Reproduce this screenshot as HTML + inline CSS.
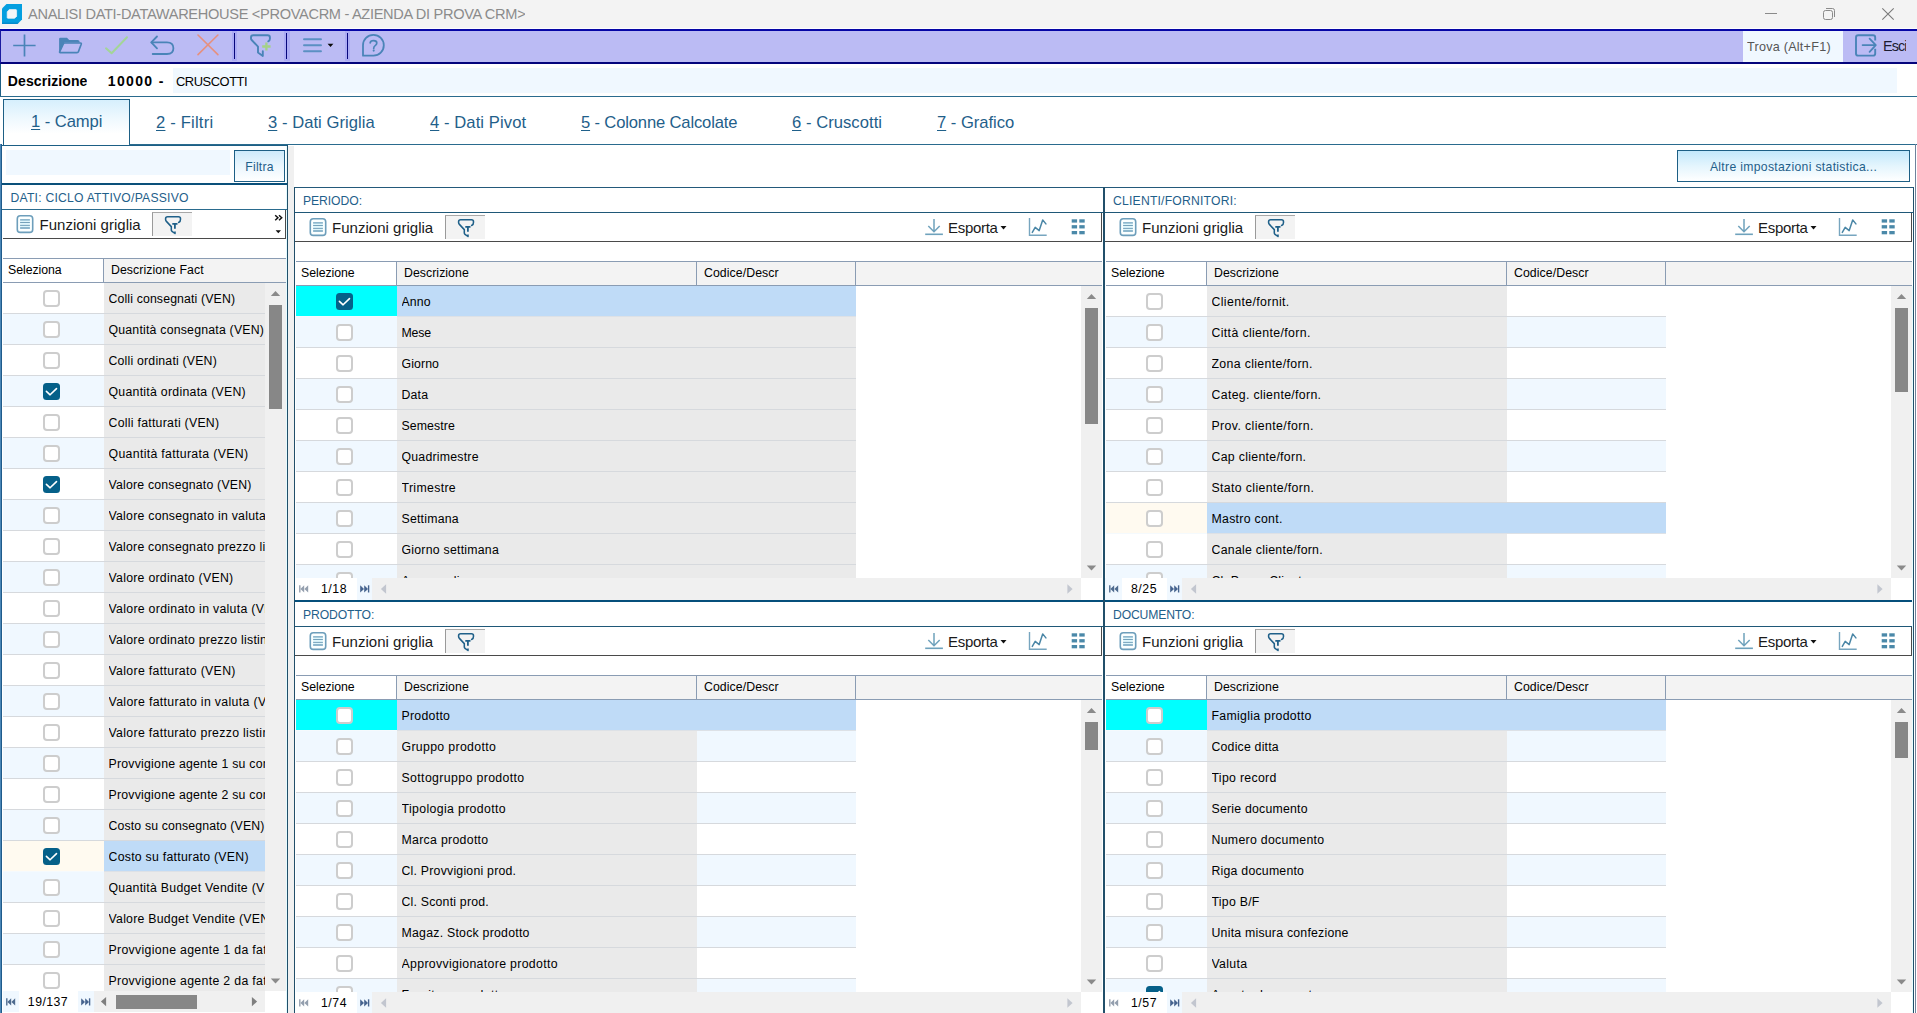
<!DOCTYPE html>
<html><head><meta charset="utf-8"><title>Analisi dati</title>
<style>
html,body{margin:0;padding:0}
body{width:1917px;height:1013px;overflow:hidden;position:relative;background:#fff;
 font-family:"Liberation Sans",sans-serif;font-size:12px;color:#000;}
div,span,svg{position:absolute;box-sizing:border-box}
.t{white-space:nowrap;overflow:hidden}
.g{font-size:12.3px;letter-spacing:.2px;color:#000;white-space:nowrap;overflow:hidden}
.lbl{font-size:12.2px;letter-spacing:.15px;color:#1f608a;white-space:nowrap}
.fg{font-size:15px;letter-spacing:.02px;color:#1a1a1a;white-space:nowrap}
.tab{font-size:16.6px;letter-spacing:.1px;color:#1f608a;white-space:nowrap}
.tab u{text-decoration-thickness:1px;text-underline-offset:2px}
.cb{width:17px;height:17px;border:2px solid #cdcdcd;border-radius:4px;background:#fff}
.cbc{width:17px;height:17px;border-radius:3.5px;background:#056089}
.hl{background:#8a9cb3}
.rl{background:#d6d9dd}
</style></head>
<body>
<div style="left:0px;top:0px;width:1917px;height:29px;background:#f3f3f3;"></div>
<div style="left:0px;top:28px;width:1917px;height:1px;background:#fbfbff;"></div>
<svg style="left:2px;top:4px" width="20" height="20" viewBox="0 0 20 20"><path d="M4.5 0H20V15.5L15.5 20H0V4.5Z" fill="#049fe0"/><path d="M0 18.4V20H15.5L17.1 18.4Z" fill="#0377b8" opacity=".5"/><path d="M7.3 5.6H13.8Q14.6 5.6 14.6 6.4V12.3L12.6 14.3H6Q5.2 14.3 5.2 13.5V7.7Z" fill="#f4f6f8" stroke="#f4f6f8" stroke-width="0.7" stroke-linejoin="round"/></svg>
<div class="t" style="left:28px;top:4px;height:21px;line-height:21px;font-size:14.6px;color:#8b8b8b;letter-spacing:-.32px;">ANALISI DATI-DATAWAREHOUSE &lt;PROVACRM - AZIENDA DI PROVA CRM&gt;</div>
<div style="left:1765px;top:13px;width:12px;height:1px;background:#8a8a8a;"></div>
<svg style="left:1822px;top:7px" width="14" height="14" viewBox="0 0 14 14"><rect x="1.5" y="3.5" width="9" height="9" rx="2" fill="none" stroke="#8a8a8a" stroke-width="1"/><path d="M4 1.5H10.5Q12.5 1.5 12.5 3.5V10" fill="none" stroke="#8a8a8a" stroke-width="1"/></svg>
<svg style="left:1881px;top:7px" width="14" height="14" viewBox="0 0 14 14"><path d="M1.3 1.3L12.7 12.7M12.7 1.3L1.3 12.7" stroke="#7a7a7a" stroke-width="1.1" fill="none"/></svg>
<div style="left:0px;top:29px;width:1917px;height:35px;background:#bbbbf4;border-top:2px solid #0505a5;border-bottom:2px solid #04047c;border-left:1px solid #1a1aa0;"></div>
<svg style="left:12px;top:33px" width="26" height="26" viewBox="0 0 26 26"><path d="M12.5 1.6V23.4M1.2 12.5H23.6" stroke="#4a84b8" stroke-width="1.7" fill="none"/></svg>
<svg style="left:58px;top:35px" width="26" height="22" viewBox="0 0 26 22"><path d="M1.1 17.5V4Q1.1 2.8 2.3 2.8H9L11.2 4.9H19.6Q21.6 4.9 21.7 7V7.6H7Q5.9 7.6 5.5 8.6L1.7 17.5Z" fill="#4a84b8"/><path d="M6.6 8H22.4Q23.6 8 23.2 9.2L20.4 16.8Q20.1 17.6 19 17.6H2.3Q1.3 17.6 1.7 16.6L5.3 8.8Q5.7 8 6.6 8Z" fill="none" stroke="#4a84b8" stroke-width="1.7" stroke-linejoin="round"/></svg>
<svg style="left:103px;top:34px" width="28" height="24" viewBox="0 0 28 24"><path d="M3 14.3L8.6 19.3L24 3.3" stroke="#a3d597" stroke-width="2" fill="none" stroke-linecap="round" stroke-linejoin="round"/></svg>
<svg style="left:150px;top:34px" width="26" height="24" viewBox="0 0 26 24"><path d="M7 2.5L1.3 8.4L7 14.4" fill="none" stroke="#4a84b8" stroke-width="1.8" stroke-linecap="round" stroke-linejoin="round"/><path d="M1.6 8.4H17Q23.4 8.4 23.4 14.2Q23.4 20 17 20H2.7" fill="none" stroke="#4a84b8" stroke-width="1.8" stroke-linecap="round"/></svg>
<svg style="left:196px;top:34px" width="24" height="24" viewBox="0 0 24 24"><path d="M2 1L21.9 20.6M21.9 1L2 20.6" stroke="#e6907f" stroke-width="1.6" fill="none" stroke-linecap="round"/></svg>
<div style="left:231.7px;top:31px;width:5.8px;height:30px;background:#ababf4;"></div>
<div style="left:233.65px;top:33px;width:1.7px;height:26px;background:#06067c;"></div>
<div style="left:283.8px;top:31px;width:5.8px;height:30px;background:#ababf4;"></div>
<div style="left:285.75px;top:33px;width:1.7px;height:26px;background:#06067c;"></div>
<div style="left:344.7px;top:31px;width:5.8px;height:30px;background:#ababf4;"></div>
<div style="left:346.65px;top:33px;width:1.7px;height:26px;background:#06067c;"></div>
<svg style="left:240px;top:28px" width="40" height="36" viewBox="0 0 40 36"><path d="M28.3 13.3Q30 12.6 29.9 10.6V9.4Q29.9 7.2 27.6 7.2H13.2Q11 7.2 11 9.4V10.4Q11 11.3 11.7 12L18 18.6V24.4L22.8 27.9V23.2" fill="none" stroke="#4a84b8" stroke-width="1.9" stroke-linejoin="round" stroke-linecap="round"/><path d="M26.4 14.4V22.6M22.2 18.5H30.6" stroke="#a4d286" stroke-width="2.3" fill="none"/></svg>
<svg style="left:295px;top:28px" width="50" height="36" viewBox="0 0 50 36"><path d="M9 11.2H26M9 17.2H26M9 23.2H26" stroke="#5b90c2" stroke-width="1.9" fill="none" stroke-linecap="round"/><path d="M32.6 15.8H38.4L35.5 19.1Z" fill="#0a0a0a"/></svg>
<svg style="left:355px;top:28px" width="36" height="36" viewBox="0 0 36 36"><path d="M8 27.7V17.3A10.4 10.4 0 1 1 18.4 27.7Z" fill="none" stroke="#4a84b8" stroke-width="1.8" stroke-linejoin="round"/><path d="M15.2 14.8Q15.4 12.6 18.6 12.6Q21.8 12.6 21.8 15Q21.8 16.6 20.2 17.6Q18.7 18.5 18.7 20.4" fill="none" stroke="#4a84b8" stroke-width="1.7" stroke-linecap="round"/><circle cx="18.7" cy="22.6" r="1.05" fill="#4a84b8"/></svg>
<div style="left:1743px;top:31px;width:100px;height:31px;background:#f0f8ff;"></div>
<div class="t" style="left:1747px;top:32px;height:31px;line-height:31px;font-size:12.6px;color:#555;letter-spacing:.25px;">Trova (Alt+F1)</div>
<svg style="left:1850px;top:28px" width="30" height="36" viewBox="0 0 30 36"><path d="M25.2 12.4V9.4Q25.2 7.2 23 7.2H8.2Q6 7.2 6 9.4V25.4Q6 27.6 8.2 27.6H23Q25.2 27.6 25.2 25.4V20.8" fill="none" stroke="#4a84b8" stroke-width="1.9" stroke-linecap="butt"/><path d="M12.6 17.1H25.2M19.6 10.6L25.8 17.1L19.6 23.8" fill="none" stroke="#4a84b8" stroke-width="1.8" stroke-linecap="round" stroke-linejoin="round"/></svg>
<div class="t" style="left:1883px;top:35px;height:23px;line-height:23px;font-size:14.4px;color:#1c1c30;letter-spacing:-.95px;">Esci</div>
<div style="left:0px;top:64px;width:1px;height:33px;background:#1d5f85;"></div>
<div class="t" style="left:7.8px;top:69px;height:25px;line-height:25px;font-weight:bold;font-size:14px;letter-spacing:.1px;">Descrizione</div>
<div class="t" style="left:107.8px;top:69px;height:25px;line-height:25px;font-weight:bold;font-size:14px;letter-spacing:1.35px;">10000 -</div>
<div style="left:173px;top:68px;width:1724px;height:25px;background:#f0f8ff;"></div>
<div class="t" style="left:176px;top:69px;height:25px;line-height:25px;font-size:12.9px;letter-spacing:-.45px;">CRUSCOTTI</div>
<div style="left:0px;top:96px;width:1917px;height:1px;background:#2a6b8e;"></div>
<div style="left:3px;top:99px;width:127px;height:46px;border:1px solid #1d5f85;border-bottom:none;background:linear-gradient(#d6effd 0%,#eef8fe 40%,#ffffff 75%);"></div>
<div class="tab" style="left:31px;top:110px;height:24px;line-height:24px;letter-spacing:-0.062px;"><u>1</u> - Campi</div>
<div class="tab" style="left:156px;top:111px;height:24px;line-height:24px;letter-spacing:0.196px;"><u>2</u> - Filtri</div>
<div class="tab" style="left:268px;top:111px;height:24px;line-height:24px;letter-spacing:0.044px;"><u>3</u> - Dati Griglia</div>
<div class="tab" style="left:430px;top:111px;height:24px;line-height:24px;letter-spacing:0.082px;"><u>4</u> - Dati Pivot</div>
<div class="tab" style="left:581px;top:111px;height:24px;line-height:24px;letter-spacing:-0.155px;"><u>5</u> - Colonne Calcolate</div>
<div class="tab" style="left:792px;top:111px;height:24px;line-height:24px;letter-spacing:0.044px;"><u>6</u> - Cruscotti</div>
<div class="tab" style="left:937px;top:111px;height:24px;line-height:24px;letter-spacing:-0.019px;"><u>7</u> - Grafico</div>
<div style="left:129px;top:144px;width:1788px;height:1px;background:#2a6b8e;"></div>
<div style="left:129px;top:145px;width:159px;height:1px;background:#1d5f85;"></div>
<div style="left:288px;top:146px;width:6px;height:867px;background:#f0f0f0;"></div>
<div style="left:294px;top:187px;width:810px;height:1px;background:#23597a;"></div>
<div style="left:294px;top:187px;width:1px;height:414px;background:#214f6a;"></div>
<div class="lbl" style="left:303px;top:189px;height:24px;line-height:24px;letter-spacing:-0.083px;">PERIODO:</div>
<div style="left:295px;top:212px;width:808px;height:1px;background:#1f5878;"></div>
<div style="left:295px;top:241px;width:807px;height:1px;background:#4a4a4a;"></div>
<div style="left:1101px;top:213px;width:1px;height:29px;background:#4a4a4a;"></div>
<svg style="left:309px;top:218px" width="19" height="19" viewBox="0 0 19 19"><rect x="1.3" y="0.8" width="15.4" height="16.6" rx="3" fill="#fbffff" stroke="#6d9ebb" stroke-width="1.6"/><rect x="4.1" y="4.2" width="9.8" height="9.6" fill="#dff6fb"/><path d="M4.1 4.9H13.9M4.1 13H13.9" stroke="#73a3bf" stroke-width="1.4" fill="none"/><path d="M4.1 7.5H13.9M4.1 10.4H13.9" stroke="#6a98b3" stroke-width="0.9" fill="none"/></svg>
<div class="fg" style="left:332px;top:216px;height:24px;line-height:24px;">Funzioni griglia</div>
<div style="left:445px;top:215px;width:40px;height:24px;background:#f3f3f3;border-left:1px solid #9a9a9a;border-top:1px solid #a8a8a8;"></div>
<svg style="left:445px;top:215px" width="40" height="24" viewBox="0 0 40 24"><path d="M26.6 10.5Q28.6 9.6 28.5 7.2V6.7Q28.5 4.7 26.5 4.7H15.6Q13.6 4.7 13.6 6.7V7.6Q13.6 8.6 14.4 9.4L19.3 14.6V18Q19.3 18.8 20 19.3L23 21.5V20" fill="none" stroke="#1f6089" stroke-width="1.55" stroke-linejoin="round" stroke-linecap="round"/><path d="M20.3 11.9H25.5M22.9 11.9V16.8" stroke="#1f6089" stroke-width="1.8" fill="none"/></svg>
<svg style="left:924px;top:218px" width="20" height="20" viewBox="0 0 20 20"><path d="M10 1V13.4M4.3 8L10 13.7L15.7 8" fill="none" stroke="#6fa2bc" stroke-width="1.5" stroke-linejoin="miter"/><path d="M1.2 16.3H18.9" stroke="#6fa2bc" stroke-width="1.6"/></svg>
<div class="fg" style="left:948px;top:216px;height:24px;line-height:24px;letter-spacing:-.3px;">Esporta</div>
<svg style="left:1000px;top:225px" width="8" height="6" viewBox="0 0 8 6"><path d="M0.5 1H6.5L3.5 4.4Z" fill="#111"/></svg>
<svg style="left:1028px;top:217px" width="22" height="22" viewBox="0 0 22 22"><path d="M1.5 1V18.2H18.7" fill="none" stroke="#77a5bf" stroke-width="1.4"/><path d="M4.3 15.4L7.2 10.4L11.2 13.6L14.7 2.9L17.9 6.9" fill="none" stroke="#4a86a6" stroke-width="1.5" stroke-linejoin="round" stroke-linecap="round"/></svg>
<svg style="left:1071px;top:219px" width="15" height="16" viewBox="0 0 15 16"><rect x="0.7" y="0.3" width="5.4" height="3.3" fill="#4b89a9"/><rect x="8.3" y="0.3" width="5.4" height="3.3" fill="#4b89a9"/><rect x="0.7" y="6.15" width="5.4" height="3.3" fill="#4b89a9"/><rect x="8.3" y="6.15" width="5.4" height="3.3" fill="#4b89a9"/><rect x="0.7" y="12" width="5.4" height="3.3" fill="#4b89a9"/><rect x="8.3" y="12" width="5.4" height="3.3" fill="#4b89a9"/></svg>
<div style="left:296px;top:261px;width:806px;height:1px;background:#8a9cb3;"></div>
<div style="left:296px;top:262px;width:100px;height:23px;background:#fff;"></div>
<div style="left:397px;top:262px;width:705px;height:23px;background:#f3f3f3;"></div>
<div style="left:296px;top:285px;width:806px;height:1px;background:#8a9cb3;"></div>
<div style="left:396px;top:261px;width:1px;height:25px;background:#8a9cb3;"></div>
<div style="left:696px;top:261px;width:1px;height:25px;background:#8a9cb3;"></div>
<div style="left:855px;top:261px;width:1px;height:25px;background:#8a9cb3;"></div>
<div class="g" style="left:301px;top:262px;height:23px;line-height:23px;letter-spacing:-0.044px;">Selezione</div>
<div class="g" style="left:404px;top:262px;height:23px;line-height:23px;letter-spacing:0.048px;">Descrizione</div>
<div class="g" style="left:704px;top:262px;height:23px;line-height:23px;letter-spacing:0.074px;">Codice/Descr</div>
<div style="left:295px;top:286px;width:808px;height:292px;overflow:hidden">
<div style="left:1px;top:0px;width:101px;height:30px;background:#00ffff;"></div>
<div style="left:102px;top:0px;width:300px;height:30px;background:#bfdbf7;"></div>
<div style="left:402px;top:0px;width:159px;height:30px;background:#bfdbf7;"></div>
<div style="left:1px;top:30px;width:101px;height:1px;background:#f5fafd;"></div>
<div style="left:102px;top:30px;width:459px;height:1px;background:#dde1e6;"></div>
<div class="cbc" style="left:41px;top:7px"><svg style="left:0;top:0" width="17" height="17" viewBox="0 0 17 17"><path d="M3.4 8.4L7.1 11.8L13.5 5.6" fill="none" stroke="#fff" stroke-width="1.6" stroke-linecap="round" stroke-linejoin="round"/></svg></div>
<div class="g" style="left:106.5px;top:1px;height:30px;line-height:30px;width:294px;letter-spacing:0.128px;">Anno</div>
<div style="left:1px;top:31px;width:101px;height:30px;background:#f0f8ff;"></div>
<div style="left:102px;top:31px;width:300px;height:30px;background:#eaeaea;"></div>
<div style="left:402px;top:31px;width:159px;height:30px;background:#eaeaea;"></div>
<div style="left:1px;top:61px;width:560px;height:1px;background:#d6d9dd;"></div>
<div class="cb" style="left:41px;top:38px"></div>
<div class="g" style="left:106.5px;top:32px;height:30px;line-height:30px;width:294px;letter-spacing:-0.164px;">Mese</div>
<div style="left:1px;top:62px;width:101px;height:30px;background:#fff;"></div>
<div style="left:102px;top:62px;width:300px;height:30px;background:#eaeaea;"></div>
<div style="left:402px;top:62px;width:159px;height:30px;background:#eaeaea;"></div>
<div style="left:1px;top:92px;width:560px;height:1px;background:#d6d9dd;"></div>
<div class="cb" style="left:41px;top:69px"></div>
<div class="g" style="left:106.5px;top:63px;height:30px;line-height:30px;width:294px;letter-spacing:0.106px;">Giorno</div>
<div style="left:1px;top:93px;width:101px;height:30px;background:#f0f8ff;"></div>
<div style="left:102px;top:93px;width:300px;height:30px;background:#eaeaea;"></div>
<div style="left:402px;top:93px;width:159px;height:30px;background:#eaeaea;"></div>
<div style="left:1px;top:123px;width:560px;height:1px;background:#d6d9dd;"></div>
<div class="cb" style="left:41px;top:100px"></div>
<div class="g" style="left:106.5px;top:94px;height:30px;line-height:30px;width:294px;letter-spacing:0.180px;">Data</div>
<div style="left:1px;top:124px;width:101px;height:30px;background:#fff;"></div>
<div style="left:102px;top:124px;width:300px;height:30px;background:#eaeaea;"></div>
<div style="left:402px;top:124px;width:159px;height:30px;background:#eaeaea;"></div>
<div style="left:1px;top:154px;width:560px;height:1px;background:#d6d9dd;"></div>
<div class="cb" style="left:41px;top:131px"></div>
<div class="g" style="left:106.5px;top:125px;height:30px;line-height:30px;width:294px;letter-spacing:0.088px;">Semestre</div>
<div style="left:1px;top:155px;width:101px;height:30px;background:#f0f8ff;"></div>
<div style="left:102px;top:155px;width:300px;height:30px;background:#eaeaea;"></div>
<div style="left:402px;top:155px;width:159px;height:30px;background:#eaeaea;"></div>
<div style="left:1px;top:185px;width:560px;height:1px;background:#d6d9dd;"></div>
<div class="cb" style="left:41px;top:162px"></div>
<div class="g" style="left:106.5px;top:156px;height:30px;line-height:30px;width:294px;letter-spacing:0.231px;">Quadrimestre</div>
<div style="left:1px;top:186px;width:101px;height:30px;background:#fff;"></div>
<div style="left:102px;top:186px;width:300px;height:30px;background:#eaeaea;"></div>
<div style="left:402px;top:186px;width:159px;height:30px;background:#eaeaea;"></div>
<div style="left:1px;top:216px;width:560px;height:1px;background:#d6d9dd;"></div>
<div class="cb" style="left:41px;top:193px"></div>
<div class="g" style="left:106.5px;top:187px;height:30px;line-height:30px;width:294px;letter-spacing:0.339px;">Trimestre</div>
<div style="left:1px;top:217px;width:101px;height:30px;background:#f0f8ff;"></div>
<div style="left:102px;top:217px;width:300px;height:30px;background:#eaeaea;"></div>
<div style="left:402px;top:217px;width:159px;height:30px;background:#eaeaea;"></div>
<div style="left:1px;top:247px;width:560px;height:1px;background:#d6d9dd;"></div>
<div class="cb" style="left:41px;top:224px"></div>
<div class="g" style="left:106.5px;top:218px;height:30px;line-height:30px;width:294px;letter-spacing:0.219px;">Settimana</div>
<div style="left:1px;top:248px;width:101px;height:30px;background:#fff;"></div>
<div style="left:102px;top:248px;width:300px;height:30px;background:#eaeaea;"></div>
<div style="left:402px;top:248px;width:159px;height:30px;background:#eaeaea;"></div>
<div style="left:1px;top:278px;width:560px;height:1px;background:#d6d9dd;"></div>
<div class="cb" style="left:41px;top:255px"></div>
<div class="g" style="left:106.5px;top:249px;height:30px;line-height:30px;width:294px;letter-spacing:0.242px;">Giorno settimana</div>
<div style="left:1px;top:279px;width:101px;height:30px;background:#f0f8ff;"></div>
<div style="left:102px;top:279px;width:300px;height:30px;background:#eaeaea;"></div>
<div style="left:402px;top:279px;width:159px;height:30px;background:#eaeaea;"></div>
<div style="left:1px;top:309px;width:560px;height:1px;background:#d6d9dd;"></div>
<div class="cb" style="left:41px;top:286px"></div>
<div class="g" style="left:106.5px;top:280px;height:30px;line-height:30px;width:294px;letter-spacing:0.126px;">Anno scoli</div>
</div>
<div style="left:1081px;top:286px;width:21px;height:292px;background:#f0f0f0;"></div>
<svg style="left:1081px;top:286px" width="21" height="292" viewBox="0 0 21 292"><path d="M5.8 13.1L15.2 13.1L10.5 7.9Z" fill="#8a8a8a"/><path d="M5.8 279.4L15.2 279.4L10.5 284.6Z" fill="#8a8a8a"/></svg>
<div style="left:1085px;top:308px;width:13px;height:116px;background:#878787;"></div>
<div style="left:295px;top:578px;width:62px;height:22px;background:#fff;"></div>
<div style="left:357px;top:578px;width:15px;height:22px;background:#f0f8ff;"></div>
<div style="left:372px;top:578px;width:709px;height:22px;background:#f0f0f0;"></div>
<svg style="left:299px;top:585px" width="10" height="8" viewBox="0 0 10 8"><path d="M0.8 0.3V7.5" stroke="#949fae" stroke-width="1.4"/><path d="M5.2 0.3V7.5L1.4 3.9Z" fill="#949fae"/><path d="M9.2 0.3V7.5L5.4 3.9Z" fill="#949fae"/></svg>
<div class="g" style="left:309px;top:578px;height:22px;line-height:22px;width:50px;letter-spacing:0.555px;text-align:center;">1/18</div>
<svg style="left:360px;top:585px" width="10" height="8" viewBox="0 0 10 8"><path d="M8.6 0.3V7.5" stroke="#46648f" stroke-width="1.4"/><path d="M4.2 0.3V7.5L8 3.9Z" fill="#46648f"/><path d="M0.2 0.3V7.5L4 3.9Z" fill="#46648f"/></svg>
<svg style="left:372px;top:578px" width="709" height="22" viewBox="0 0 709 22"><path d="M14.1 6.3L14.1 15.7L8.9 11Z" fill="#c2c6cf"/><path d="M695.4 6.3L695.4 15.7L700.6 11Z" fill="#c2c6cf"/></svg>
<div style="left:1103px;top:187px;width:811px;height:1px;background:#23597a;"></div>
<div style="left:1103px;top:187px;width:2px;height:414px;background:#214f6a;"></div>
<div class="lbl" style="left:1113px;top:189px;height:24px;line-height:24px;letter-spacing:0.198px;">CLIENTI/FORNITORI:</div>
<div style="left:1105px;top:212px;width:808px;height:1px;background:#1f5878;"></div>
<div style="left:1105px;top:241px;width:807px;height:1px;background:#4a4a4a;"></div>
<div style="left:1911px;top:213px;width:1px;height:29px;background:#4a4a4a;"></div>
<svg style="left:1119px;top:218px" width="19" height="19" viewBox="0 0 19 19"><rect x="1.3" y="0.8" width="15.4" height="16.6" rx="3" fill="#fbffff" stroke="#6d9ebb" stroke-width="1.6"/><rect x="4.1" y="4.2" width="9.8" height="9.6" fill="#dff6fb"/><path d="M4.1 4.9H13.9M4.1 13H13.9" stroke="#73a3bf" stroke-width="1.4" fill="none"/><path d="M4.1 7.5H13.9M4.1 10.4H13.9" stroke="#6a98b3" stroke-width="0.9" fill="none"/></svg>
<div class="fg" style="left:1142px;top:216px;height:24px;line-height:24px;">Funzioni griglia</div>
<div style="left:1255px;top:215px;width:40px;height:24px;background:#f3f3f3;border-left:1px solid #9a9a9a;border-top:1px solid #a8a8a8;"></div>
<svg style="left:1255px;top:215px" width="40" height="24" viewBox="0 0 40 24"><path d="M26.6 10.5Q28.6 9.6 28.5 7.2V6.7Q28.5 4.7 26.5 4.7H15.6Q13.6 4.7 13.6 6.7V7.6Q13.6 8.6 14.4 9.4L19.3 14.6V18Q19.3 18.8 20 19.3L23 21.5V20" fill="none" stroke="#1f6089" stroke-width="1.55" stroke-linejoin="round" stroke-linecap="round"/><path d="M20.3 11.9H25.5M22.9 11.9V16.8" stroke="#1f6089" stroke-width="1.8" fill="none"/></svg>
<svg style="left:1734px;top:218px" width="20" height="20" viewBox="0 0 20 20"><path d="M10 1V13.4M4.3 8L10 13.7L15.7 8" fill="none" stroke="#6fa2bc" stroke-width="1.5" stroke-linejoin="miter"/><path d="M1.2 16.3H18.9" stroke="#6fa2bc" stroke-width="1.6"/></svg>
<div class="fg" style="left:1758px;top:216px;height:24px;line-height:24px;letter-spacing:-.3px;">Esporta</div>
<svg style="left:1810px;top:225px" width="8" height="6" viewBox="0 0 8 6"><path d="M0.5 1H6.5L3.5 4.4Z" fill="#111"/></svg>
<svg style="left:1838px;top:217px" width="22" height="22" viewBox="0 0 22 22"><path d="M1.5 1V18.2H18.7" fill="none" stroke="#77a5bf" stroke-width="1.4"/><path d="M4.3 15.4L7.2 10.4L11.2 13.6L14.7 2.9L17.9 6.9" fill="none" stroke="#4a86a6" stroke-width="1.5" stroke-linejoin="round" stroke-linecap="round"/></svg>
<svg style="left:1881px;top:219px" width="15" height="16" viewBox="0 0 15 16"><rect x="0.7" y="0.3" width="5.4" height="3.3" fill="#4b89a9"/><rect x="8.3" y="0.3" width="5.4" height="3.3" fill="#4b89a9"/><rect x="0.7" y="6.15" width="5.4" height="3.3" fill="#4b89a9"/><rect x="8.3" y="6.15" width="5.4" height="3.3" fill="#4b89a9"/><rect x="0.7" y="12" width="5.4" height="3.3" fill="#4b89a9"/><rect x="8.3" y="12" width="5.4" height="3.3" fill="#4b89a9"/></svg>
<div style="left:1106px;top:261px;width:806px;height:1px;background:#8a9cb3;"></div>
<div style="left:1106px;top:262px;width:100px;height:23px;background:#fff;"></div>
<div style="left:1207px;top:262px;width:705px;height:23px;background:#f3f3f3;"></div>
<div style="left:1106px;top:285px;width:806px;height:1px;background:#8a9cb3;"></div>
<div style="left:1206px;top:261px;width:1px;height:25px;background:#8a9cb3;"></div>
<div style="left:1506px;top:261px;width:1px;height:25px;background:#8a9cb3;"></div>
<div style="left:1665px;top:261px;width:1px;height:25px;background:#8a9cb3;"></div>
<div class="g" style="left:1111px;top:262px;height:23px;line-height:23px;letter-spacing:-0.044px;">Selezione</div>
<div class="g" style="left:1214px;top:262px;height:23px;line-height:23px;letter-spacing:0.048px;">Descrizione</div>
<div class="g" style="left:1514px;top:262px;height:23px;line-height:23px;letter-spacing:0.074px;">Codice/Descr</div>
<div style="left:1105px;top:286px;width:808px;height:292px;overflow:hidden">
<div style="left:1px;top:0px;width:101px;height:30px;background:#fff;"></div>
<div style="left:102px;top:0px;width:300px;height:30px;background:#eaeaea;"></div>
<div style="left:402px;top:0px;width:159px;height:30px;background:#fff;"></div>
<div style="left:1px;top:30px;width:560px;height:1px;background:#d6d9dd;"></div>
<div class="cb" style="left:41px;top:7px"></div>
<div class="g" style="left:106.5px;top:1px;height:30px;line-height:30px;width:294px;letter-spacing:0.375px;">Cliente/fornit.</div>
<div style="left:1px;top:31px;width:101px;height:30px;background:#f0f8ff;"></div>
<div style="left:102px;top:31px;width:300px;height:30px;background:#eaeaea;"></div>
<div style="left:402px;top:31px;width:159px;height:30px;background:#f0f8ff;"></div>
<div style="left:1px;top:61px;width:560px;height:1px;background:#d6d9dd;"></div>
<div class="cb" style="left:41px;top:38px"></div>
<div class="g" style="left:106.5px;top:32px;height:30px;line-height:30px;width:294px;letter-spacing:0.365px;">Città cliente/forn.</div>
<div style="left:1px;top:62px;width:101px;height:30px;background:#fff;"></div>
<div style="left:102px;top:62px;width:300px;height:30px;background:#eaeaea;"></div>
<div style="left:402px;top:62px;width:159px;height:30px;background:#fff;"></div>
<div style="left:1px;top:92px;width:560px;height:1px;background:#d6d9dd;"></div>
<div class="cb" style="left:41px;top:69px"></div>
<div class="g" style="left:106.5px;top:63px;height:30px;line-height:30px;width:294px;letter-spacing:0.350px;">Zona cliente/forn.</div>
<div style="left:1px;top:93px;width:101px;height:30px;background:#f0f8ff;"></div>
<div style="left:102px;top:93px;width:300px;height:30px;background:#eaeaea;"></div>
<div style="left:402px;top:93px;width:159px;height:30px;background:#f0f8ff;"></div>
<div style="left:1px;top:123px;width:560px;height:1px;background:#d6d9dd;"></div>
<div class="cb" style="left:41px;top:100px"></div>
<div class="g" style="left:106.5px;top:94px;height:30px;line-height:30px;width:294px;letter-spacing:0.331px;">Categ. cliente/forn.</div>
<div style="left:1px;top:124px;width:101px;height:30px;background:#fff;"></div>
<div style="left:102px;top:124px;width:300px;height:30px;background:#eaeaea;"></div>
<div style="left:402px;top:124px;width:159px;height:30px;background:#fff;"></div>
<div style="left:1px;top:154px;width:560px;height:1px;background:#d6d9dd;"></div>
<div class="cb" style="left:41px;top:131px"></div>
<div class="g" style="left:106.5px;top:125px;height:30px;line-height:30px;width:294px;letter-spacing:0.392px;">Prov. cliente/forn.</div>
<div style="left:1px;top:155px;width:101px;height:30px;background:#f0f8ff;"></div>
<div style="left:102px;top:155px;width:300px;height:30px;background:#eaeaea;"></div>
<div style="left:402px;top:155px;width:159px;height:30px;background:#f0f8ff;"></div>
<div style="left:1px;top:185px;width:560px;height:1px;background:#d6d9dd;"></div>
<div class="cb" style="left:41px;top:162px"></div>
<div class="g" style="left:106.5px;top:156px;height:30px;line-height:30px;width:294px;letter-spacing:0.307px;">Cap cliente/forn.</div>
<div style="left:1px;top:186px;width:101px;height:30px;background:#fff;"></div>
<div style="left:102px;top:186px;width:300px;height:30px;background:#eaeaea;"></div>
<div style="left:402px;top:186px;width:159px;height:30px;background:#fff;"></div>
<div style="left:1px;top:216px;width:560px;height:1px;background:#d6d9dd;"></div>
<div class="cb" style="left:41px;top:193px"></div>
<div class="g" style="left:106.5px;top:187px;height:30px;line-height:30px;width:294px;letter-spacing:0.369px;">Stato cliente/forn.</div>
<div style="left:1px;top:217px;width:101px;height:30px;background:#fffaf0;"></div>
<div style="left:102px;top:217px;width:300px;height:30px;background:#bfdbf7;"></div>
<div style="left:402px;top:217px;width:159px;height:30px;background:#bfdbf7;"></div>
<div style="left:1px;top:247px;width:101px;height:1px;background:#f5fafd;"></div>
<div style="left:102px;top:247px;width:459px;height:1px;background:#dde1e6;"></div>
<div class="cb" style="left:41px;top:224px"></div>
<div class="g" style="left:106.5px;top:218px;height:30px;line-height:30px;width:294px;letter-spacing:0.287px;">Mastro cont.</div>
<div style="left:1px;top:248px;width:101px;height:30px;background:#fff;"></div>
<div style="left:102px;top:248px;width:300px;height:30px;background:#eaeaea;"></div>
<div style="left:402px;top:248px;width:159px;height:30px;background:#fff;"></div>
<div style="left:1px;top:278px;width:560px;height:1px;background:#d6d9dd;"></div>
<div class="cb" style="left:41px;top:255px"></div>
<div class="g" style="left:106.5px;top:249px;height:30px;line-height:30px;width:294px;letter-spacing:0.273px;">Canale cliente/forn.</div>
<div style="left:1px;top:279px;width:101px;height:30px;background:#f0f8ff;"></div>
<div style="left:102px;top:279px;width:300px;height:30px;background:#eaeaea;"></div>
<div style="left:402px;top:279px;width:159px;height:30px;background:#f0f8ff;"></div>
<div style="left:1px;top:309px;width:560px;height:1px;background:#d6d9dd;"></div>
<div class="cb" style="left:41px;top:286px"></div>
<div class="g" style="left:106.5px;top:280px;height:30px;line-height:30px;width:294px;letter-spacing:0.179px;">Cl. Provv. Cliente</div>
</div>
<div style="left:1891px;top:286px;width:21px;height:292px;background:#f0f0f0;"></div>
<svg style="left:1891px;top:286px" width="21" height="292" viewBox="0 0 21 292"><path d="M5.8 13.1L15.2 13.1L10.5 7.9Z" fill="#8a8a8a"/><path d="M5.8 279.4L15.2 279.4L10.5 284.6Z" fill="#8a8a8a"/></svg>
<div style="left:1895px;top:308px;width:13px;height:84px;background:#878787;"></div>
<div style="left:1105px;top:578px;width:62px;height:22px;background:#fff;"></div>
<div style="left:1105px;top:578px;width:17px;height:22px;background:#f0f8ff;"></div>
<div style="left:1167px;top:578px;width:15px;height:22px;background:#f0f8ff;"></div>
<div style="left:1182px;top:578px;width:709px;height:22px;background:#f0f0f0;"></div>
<svg style="left:1109px;top:585px" width="10" height="8" viewBox="0 0 10 8"><path d="M0.8 0.3V7.5" stroke="#4d6a8e" stroke-width="1.4"/><path d="M5.2 0.3V7.5L1.4 3.9Z" fill="#4d6a8e"/><path d="M9.2 0.3V7.5L5.4 3.9Z" fill="#4d6a8e"/></svg>
<div class="g" style="left:1119px;top:578px;height:22px;line-height:22px;width:50px;letter-spacing:0.555px;text-align:center;">8/25</div>
<svg style="left:1170px;top:585px" width="10" height="8" viewBox="0 0 10 8"><path d="M8.6 0.3V7.5" stroke="#46648f" stroke-width="1.4"/><path d="M4.2 0.3V7.5L8 3.9Z" fill="#46648f"/><path d="M0.2 0.3V7.5L4 3.9Z" fill="#46648f"/></svg>
<svg style="left:1182px;top:578px" width="709" height="22" viewBox="0 0 709 22"><path d="M14.1 6.3L14.1 15.7L8.9 11Z" fill="#c2c6cf"/><path d="M695.4 6.3L695.4 15.7L700.6 11Z" fill="#c2c6cf"/></svg>
<div style="left:294px;top:600px;width:810px;height:2px;background:#054f7b;"></div>
<div style="left:294px;top:600px;width:1px;height:414px;background:#214f6a;"></div>
<div class="lbl" style="left:303px;top:603px;height:24px;line-height:24px;letter-spacing:-0.115px;">PRODOTTO:</div>
<div style="left:295px;top:626px;width:808px;height:1px;background:#1f5878;"></div>
<div style="left:295px;top:655px;width:807px;height:1px;background:#4a4a4a;"></div>
<div style="left:1101px;top:627px;width:1px;height:29px;background:#4a4a4a;"></div>
<svg style="left:309px;top:632px" width="19" height="19" viewBox="0 0 19 19"><rect x="1.3" y="0.8" width="15.4" height="16.6" rx="3" fill="#fbffff" stroke="#6d9ebb" stroke-width="1.6"/><rect x="4.1" y="4.2" width="9.8" height="9.6" fill="#dff6fb"/><path d="M4.1 4.9H13.9M4.1 13H13.9" stroke="#73a3bf" stroke-width="1.4" fill="none"/><path d="M4.1 7.5H13.9M4.1 10.4H13.9" stroke="#6a98b3" stroke-width="0.9" fill="none"/></svg>
<div class="fg" style="left:332px;top:630px;height:24px;line-height:24px;">Funzioni griglia</div>
<div style="left:445px;top:629px;width:40px;height:24px;background:#f3f3f3;border-left:1px solid #9a9a9a;border-top:1px solid #a8a8a8;"></div>
<svg style="left:445px;top:629px" width="40" height="24" viewBox="0 0 40 24"><path d="M26.6 10.5Q28.6 9.6 28.5 7.2V6.7Q28.5 4.7 26.5 4.7H15.6Q13.6 4.7 13.6 6.7V7.6Q13.6 8.6 14.4 9.4L19.3 14.6V18Q19.3 18.8 20 19.3L23 21.5V20" fill="none" stroke="#1f6089" stroke-width="1.55" stroke-linejoin="round" stroke-linecap="round"/><path d="M20.3 11.9H25.5M22.9 11.9V16.8" stroke="#1f6089" stroke-width="1.8" fill="none"/></svg>
<svg style="left:924px;top:632px" width="20" height="20" viewBox="0 0 20 20"><path d="M10 1V13.4M4.3 8L10 13.7L15.7 8" fill="none" stroke="#6fa2bc" stroke-width="1.5" stroke-linejoin="miter"/><path d="M1.2 16.3H18.9" stroke="#6fa2bc" stroke-width="1.6"/></svg>
<div class="fg" style="left:948px;top:630px;height:24px;line-height:24px;letter-spacing:-.3px;">Esporta</div>
<svg style="left:1000px;top:639px" width="8" height="6" viewBox="0 0 8 6"><path d="M0.5 1H6.5L3.5 4.4Z" fill="#111"/></svg>
<svg style="left:1028px;top:631px" width="22" height="22" viewBox="0 0 22 22"><path d="M1.5 1V18.2H18.7" fill="none" stroke="#77a5bf" stroke-width="1.4"/><path d="M4.3 15.4L7.2 10.4L11.2 13.6L14.7 2.9L17.9 6.9" fill="none" stroke="#4a86a6" stroke-width="1.5" stroke-linejoin="round" stroke-linecap="round"/></svg>
<svg style="left:1071px;top:633px" width="15" height="16" viewBox="0 0 15 16"><rect x="0.7" y="0.3" width="5.4" height="3.3" fill="#4b89a9"/><rect x="8.3" y="0.3" width="5.4" height="3.3" fill="#4b89a9"/><rect x="0.7" y="6.15" width="5.4" height="3.3" fill="#4b89a9"/><rect x="8.3" y="6.15" width="5.4" height="3.3" fill="#4b89a9"/><rect x="0.7" y="12" width="5.4" height="3.3" fill="#4b89a9"/><rect x="8.3" y="12" width="5.4" height="3.3" fill="#4b89a9"/></svg>
<div style="left:296px;top:675px;width:806px;height:1px;background:#8a9cb3;"></div>
<div style="left:296px;top:676px;width:100px;height:23px;background:#fff;"></div>
<div style="left:397px;top:676px;width:705px;height:23px;background:#f3f3f3;"></div>
<div style="left:296px;top:699px;width:806px;height:1px;background:#8a9cb3;"></div>
<div style="left:396px;top:675px;width:1px;height:25px;background:#8a9cb3;"></div>
<div style="left:696px;top:675px;width:1px;height:25px;background:#8a9cb3;"></div>
<div style="left:855px;top:675px;width:1px;height:25px;background:#8a9cb3;"></div>
<div class="g" style="left:301px;top:676px;height:23px;line-height:23px;letter-spacing:-0.044px;">Selezione</div>
<div class="g" style="left:404px;top:676px;height:23px;line-height:23px;letter-spacing:0.048px;">Descrizione</div>
<div class="g" style="left:704px;top:676px;height:23px;line-height:23px;letter-spacing:0.074px;">Codice/Descr</div>
<div style="left:295px;top:700px;width:808px;height:292px;overflow:hidden">
<div style="left:1px;top:0px;width:101px;height:30px;background:#00ffff;"></div>
<div style="left:102px;top:0px;width:300px;height:30px;background:#bfdbf7;"></div>
<div style="left:402px;top:0px;width:159px;height:30px;background:#bfdbf7;"></div>
<div style="left:1px;top:30px;width:101px;height:1px;background:#f5fafd;"></div>
<div style="left:102px;top:30px;width:459px;height:1px;background:#dde1e6;"></div>
<div class="cb" style="left:41px;top:7px"></div>
<div class="g" style="left:106.5px;top:1px;height:30px;line-height:30px;width:294px;letter-spacing:0.277px;">Prodotto</div>
<div style="left:1px;top:31px;width:101px;height:30px;background:#f0f8ff;"></div>
<div style="left:102px;top:31px;width:300px;height:30px;background:#eaeaea;"></div>
<div style="left:402px;top:31px;width:159px;height:30px;background:#f0f8ff;"></div>
<div style="left:1px;top:61px;width:560px;height:1px;background:#d6d9dd;"></div>
<div class="cb" style="left:41px;top:38px"></div>
<div class="g" style="left:106.5px;top:32px;height:30px;line-height:30px;width:294px;letter-spacing:0.339px;">Gruppo prodotto</div>
<div style="left:1px;top:62px;width:101px;height:30px;background:#fff;"></div>
<div style="left:102px;top:62px;width:300px;height:30px;background:#eaeaea;"></div>
<div style="left:402px;top:62px;width:159px;height:30px;background:#fff;"></div>
<div style="left:1px;top:92px;width:560px;height:1px;background:#d6d9dd;"></div>
<div class="cb" style="left:41px;top:69px"></div>
<div class="g" style="left:106.5px;top:63px;height:30px;line-height:30px;width:294px;letter-spacing:0.377px;">Sottogruppo prodotto</div>
<div style="left:1px;top:93px;width:101px;height:30px;background:#f0f8ff;"></div>
<div style="left:102px;top:93px;width:300px;height:30px;background:#eaeaea;"></div>
<div style="left:402px;top:93px;width:159px;height:30px;background:#f0f8ff;"></div>
<div style="left:1px;top:123px;width:560px;height:1px;background:#d6d9dd;"></div>
<div class="cb" style="left:41px;top:100px"></div>
<div class="g" style="left:106.5px;top:94px;height:30px;line-height:30px;width:294px;letter-spacing:0.359px;">Tipologia prodotto</div>
<div style="left:1px;top:124px;width:101px;height:30px;background:#fff;"></div>
<div style="left:102px;top:124px;width:300px;height:30px;background:#eaeaea;"></div>
<div style="left:402px;top:124px;width:159px;height:30px;background:#fff;"></div>
<div style="left:1px;top:154px;width:560px;height:1px;background:#d6d9dd;"></div>
<div class="cb" style="left:41px;top:131px"></div>
<div class="g" style="left:106.5px;top:125px;height:30px;line-height:30px;width:294px;letter-spacing:0.305px;">Marca prodotto</div>
<div style="left:1px;top:155px;width:101px;height:30px;background:#f0f8ff;"></div>
<div style="left:102px;top:155px;width:300px;height:30px;background:#eaeaea;"></div>
<div style="left:402px;top:155px;width:159px;height:30px;background:#f0f8ff;"></div>
<div style="left:1px;top:185px;width:560px;height:1px;background:#d6d9dd;"></div>
<div class="cb" style="left:41px;top:162px"></div>
<div class="g" style="left:106.5px;top:156px;height:30px;line-height:30px;width:294px;letter-spacing:0.223px;">Cl. Provvigioni prod.</div>
<div style="left:1px;top:186px;width:101px;height:30px;background:#fff;"></div>
<div style="left:102px;top:186px;width:300px;height:30px;background:#eaeaea;"></div>
<div style="left:402px;top:186px;width:159px;height:30px;background:#fff;"></div>
<div style="left:1px;top:216px;width:560px;height:1px;background:#d6d9dd;"></div>
<div class="cb" style="left:41px;top:193px"></div>
<div class="g" style="left:106.5px;top:187px;height:30px;line-height:30px;width:294px;letter-spacing:0.210px;">Cl. Sconti prod.</div>
<div style="left:1px;top:217px;width:101px;height:30px;background:#f0f8ff;"></div>
<div style="left:102px;top:217px;width:300px;height:30px;background:#eaeaea;"></div>
<div style="left:402px;top:217px;width:159px;height:30px;background:#f0f8ff;"></div>
<div style="left:1px;top:247px;width:560px;height:1px;background:#d6d9dd;"></div>
<div class="cb" style="left:41px;top:224px"></div>
<div class="g" style="left:106.5px;top:218px;height:30px;line-height:30px;width:294px;letter-spacing:0.246px;">Magaz. Stock prodotto</div>
<div style="left:1px;top:248px;width:101px;height:30px;background:#fff;"></div>
<div style="left:102px;top:248px;width:300px;height:30px;background:#eaeaea;"></div>
<div style="left:402px;top:248px;width:159px;height:30px;background:#fff;"></div>
<div style="left:1px;top:278px;width:560px;height:1px;background:#d6d9dd;"></div>
<div class="cb" style="left:41px;top:255px"></div>
<div class="g" style="left:106.5px;top:249px;height:30px;line-height:30px;width:294px;letter-spacing:0.335px;">Approvvigionatore prodotto</div>
<div style="left:1px;top:279px;width:101px;height:30px;background:#f0f8ff;"></div>
<div style="left:102px;top:279px;width:300px;height:30px;background:#eaeaea;"></div>
<div style="left:402px;top:279px;width:159px;height:30px;background:#f0f8ff;"></div>
<div style="left:1px;top:309px;width:560px;height:1px;background:#d6d9dd;"></div>
<div class="cb" style="left:41px;top:286px"></div>
<div class="g" style="left:106.5px;top:280px;height:30px;line-height:30px;width:294px;letter-spacing:0.360px;">Fornitore prodotto</div>
</div>
<div style="left:1081px;top:700px;width:21px;height:292px;background:#f0f0f0;"></div>
<svg style="left:1081px;top:700px" width="21" height="292" viewBox="0 0 21 292"><path d="M5.8 13.1L15.2 13.1L10.5 7.9Z" fill="#8a8a8a"/><path d="M5.8 279.4L15.2 279.4L10.5 284.6Z" fill="#8a8a8a"/></svg>
<div style="left:1085px;top:722px;width:13px;height:28px;background:#878787;"></div>
<div style="left:295px;top:992px;width:62px;height:22px;background:#fff;"></div>
<div style="left:357px;top:992px;width:15px;height:22px;background:#f0f8ff;"></div>
<div style="left:372px;top:992px;width:709px;height:22px;background:#f0f0f0;"></div>
<svg style="left:299px;top:999px" width="10" height="8" viewBox="0 0 10 8"><path d="M0.8 0.3V7.5" stroke="#949fae" stroke-width="1.4"/><path d="M5.2 0.3V7.5L1.4 3.9Z" fill="#949fae"/><path d="M9.2 0.3V7.5L5.4 3.9Z" fill="#949fae"/></svg>
<div class="g" style="left:309px;top:992px;height:22px;line-height:22px;width:50px;letter-spacing:0.555px;text-align:center;">1/74</div>
<svg style="left:360px;top:999px" width="10" height="8" viewBox="0 0 10 8"><path d="M8.6 0.3V7.5" stroke="#46648f" stroke-width="1.4"/><path d="M4.2 0.3V7.5L8 3.9Z" fill="#46648f"/><path d="M0.2 0.3V7.5L4 3.9Z" fill="#46648f"/></svg>
<svg style="left:372px;top:992px" width="709" height="22" viewBox="0 0 709 22"><path d="M14.1 6.3L14.1 15.7L8.9 11Z" fill="#c2c6cf"/><path d="M695.4 6.3L695.4 15.7L700.6 11Z" fill="#c2c6cf"/></svg>
<div style="left:1103px;top:600px;width:811px;height:2px;background:#054f7b;"></div>
<div style="left:1103px;top:600px;width:2px;height:414px;background:#214f6a;"></div>
<div class="lbl" style="left:1113px;top:603px;height:24px;line-height:24px;letter-spacing:-0.169px;">DOCUMENTO:</div>
<div style="left:1105px;top:626px;width:808px;height:1px;background:#1f5878;"></div>
<div style="left:1105px;top:655px;width:807px;height:1px;background:#4a4a4a;"></div>
<div style="left:1911px;top:627px;width:1px;height:29px;background:#4a4a4a;"></div>
<svg style="left:1119px;top:632px" width="19" height="19" viewBox="0 0 19 19"><rect x="1.3" y="0.8" width="15.4" height="16.6" rx="3" fill="#fbffff" stroke="#6d9ebb" stroke-width="1.6"/><rect x="4.1" y="4.2" width="9.8" height="9.6" fill="#dff6fb"/><path d="M4.1 4.9H13.9M4.1 13H13.9" stroke="#73a3bf" stroke-width="1.4" fill="none"/><path d="M4.1 7.5H13.9M4.1 10.4H13.9" stroke="#6a98b3" stroke-width="0.9" fill="none"/></svg>
<div class="fg" style="left:1142px;top:630px;height:24px;line-height:24px;">Funzioni griglia</div>
<div style="left:1255px;top:629px;width:40px;height:24px;background:#f3f3f3;border-left:1px solid #9a9a9a;border-top:1px solid #a8a8a8;"></div>
<svg style="left:1255px;top:629px" width="40" height="24" viewBox="0 0 40 24"><path d="M26.6 10.5Q28.6 9.6 28.5 7.2V6.7Q28.5 4.7 26.5 4.7H15.6Q13.6 4.7 13.6 6.7V7.6Q13.6 8.6 14.4 9.4L19.3 14.6V18Q19.3 18.8 20 19.3L23 21.5V20" fill="none" stroke="#1f6089" stroke-width="1.55" stroke-linejoin="round" stroke-linecap="round"/><path d="M20.3 11.9H25.5M22.9 11.9V16.8" stroke="#1f6089" stroke-width="1.8" fill="none"/></svg>
<svg style="left:1734px;top:632px" width="20" height="20" viewBox="0 0 20 20"><path d="M10 1V13.4M4.3 8L10 13.7L15.7 8" fill="none" stroke="#6fa2bc" stroke-width="1.5" stroke-linejoin="miter"/><path d="M1.2 16.3H18.9" stroke="#6fa2bc" stroke-width="1.6"/></svg>
<div class="fg" style="left:1758px;top:630px;height:24px;line-height:24px;letter-spacing:-.3px;">Esporta</div>
<svg style="left:1810px;top:639px" width="8" height="6" viewBox="0 0 8 6"><path d="M0.5 1H6.5L3.5 4.4Z" fill="#111"/></svg>
<svg style="left:1838px;top:631px" width="22" height="22" viewBox="0 0 22 22"><path d="M1.5 1V18.2H18.7" fill="none" stroke="#77a5bf" stroke-width="1.4"/><path d="M4.3 15.4L7.2 10.4L11.2 13.6L14.7 2.9L17.9 6.9" fill="none" stroke="#4a86a6" stroke-width="1.5" stroke-linejoin="round" stroke-linecap="round"/></svg>
<svg style="left:1881px;top:633px" width="15" height="16" viewBox="0 0 15 16"><rect x="0.7" y="0.3" width="5.4" height="3.3" fill="#4b89a9"/><rect x="8.3" y="0.3" width="5.4" height="3.3" fill="#4b89a9"/><rect x="0.7" y="6.15" width="5.4" height="3.3" fill="#4b89a9"/><rect x="8.3" y="6.15" width="5.4" height="3.3" fill="#4b89a9"/><rect x="0.7" y="12" width="5.4" height="3.3" fill="#4b89a9"/><rect x="8.3" y="12" width="5.4" height="3.3" fill="#4b89a9"/></svg>
<div style="left:1106px;top:675px;width:806px;height:1px;background:#8a9cb3;"></div>
<div style="left:1106px;top:676px;width:100px;height:23px;background:#fff;"></div>
<div style="left:1207px;top:676px;width:705px;height:23px;background:#f3f3f3;"></div>
<div style="left:1106px;top:699px;width:806px;height:1px;background:#8a9cb3;"></div>
<div style="left:1206px;top:675px;width:1px;height:25px;background:#8a9cb3;"></div>
<div style="left:1506px;top:675px;width:1px;height:25px;background:#8a9cb3;"></div>
<div style="left:1665px;top:675px;width:1px;height:25px;background:#8a9cb3;"></div>
<div class="g" style="left:1111px;top:676px;height:23px;line-height:23px;letter-spacing:-0.044px;">Selezione</div>
<div class="g" style="left:1214px;top:676px;height:23px;line-height:23px;letter-spacing:0.048px;">Descrizione</div>
<div class="g" style="left:1514px;top:676px;height:23px;line-height:23px;letter-spacing:0.074px;">Codice/Descr</div>
<div style="left:1105px;top:700px;width:808px;height:292px;overflow:hidden">
<div style="left:1px;top:0px;width:101px;height:30px;background:#00ffff;"></div>
<div style="left:102px;top:0px;width:300px;height:30px;background:#bfdbf7;"></div>
<div style="left:402px;top:0px;width:159px;height:30px;background:#bfdbf7;"></div>
<div style="left:1px;top:30px;width:101px;height:1px;background:#f5fafd;"></div>
<div style="left:102px;top:30px;width:459px;height:1px;background:#dde1e6;"></div>
<div class="cb" style="left:41px;top:7px"></div>
<div class="g" style="left:106.5px;top:1px;height:30px;line-height:30px;width:294px;letter-spacing:0.296px;">Famiglia prodotto</div>
<div style="left:1px;top:31px;width:101px;height:30px;background:#f0f8ff;"></div>
<div style="left:102px;top:31px;width:300px;height:30px;background:#eaeaea;"></div>
<div style="left:402px;top:31px;width:159px;height:30px;background:#f0f8ff;"></div>
<div style="left:1px;top:61px;width:560px;height:1px;background:#d6d9dd;"></div>
<div class="cb" style="left:41px;top:38px"></div>
<div class="g" style="left:106.5px;top:32px;height:30px;line-height:30px;width:294px;letter-spacing:0.201px;">Codice ditta</div>
<div style="left:1px;top:62px;width:101px;height:30px;background:#fff;"></div>
<div style="left:102px;top:62px;width:300px;height:30px;background:#eaeaea;"></div>
<div style="left:402px;top:62px;width:159px;height:30px;background:#fff;"></div>
<div style="left:1px;top:92px;width:560px;height:1px;background:#d6d9dd;"></div>
<div class="cb" style="left:41px;top:69px"></div>
<div class="g" style="left:106.5px;top:63px;height:30px;line-height:30px;width:294px;letter-spacing:0.306px;">Tipo record</div>
<div style="left:1px;top:93px;width:101px;height:30px;background:#f0f8ff;"></div>
<div style="left:102px;top:93px;width:300px;height:30px;background:#eaeaea;"></div>
<div style="left:402px;top:93px;width:159px;height:30px;background:#f0f8ff;"></div>
<div style="left:1px;top:123px;width:560px;height:1px;background:#d6d9dd;"></div>
<div class="cb" style="left:41px;top:100px"></div>
<div class="g" style="left:106.5px;top:94px;height:30px;line-height:30px;width:294px;letter-spacing:0.215px;">Serie documento</div>
<div style="left:1px;top:124px;width:101px;height:30px;background:#fff;"></div>
<div style="left:102px;top:124px;width:300px;height:30px;background:#eaeaea;"></div>
<div style="left:402px;top:124px;width:159px;height:30px;background:#fff;"></div>
<div style="left:1px;top:154px;width:560px;height:1px;background:#d6d9dd;"></div>
<div class="cb" style="left:41px;top:131px"></div>
<div class="g" style="left:106.5px;top:125px;height:30px;line-height:30px;width:294px;letter-spacing:0.310px;">Numero documento</div>
<div style="left:1px;top:155px;width:101px;height:30px;background:#f0f8ff;"></div>
<div style="left:102px;top:155px;width:300px;height:30px;background:#eaeaea;"></div>
<div style="left:402px;top:155px;width:159px;height:30px;background:#f0f8ff;"></div>
<div style="left:1px;top:185px;width:560px;height:1px;background:#d6d9dd;"></div>
<div class="cb" style="left:41px;top:162px"></div>
<div class="g" style="left:106.5px;top:156px;height:30px;line-height:30px;width:294px;letter-spacing:0.223px;">Riga documento</div>
<div style="left:1px;top:186px;width:101px;height:30px;background:#fff;"></div>
<div style="left:102px;top:186px;width:300px;height:30px;background:#eaeaea;"></div>
<div style="left:402px;top:186px;width:159px;height:30px;background:#fff;"></div>
<div style="left:1px;top:216px;width:560px;height:1px;background:#d6d9dd;"></div>
<div class="cb" style="left:41px;top:193px"></div>
<div class="g" style="left:106.5px;top:187px;height:30px;line-height:30px;width:294px;letter-spacing:0.265px;">Tipo B/F</div>
<div style="left:1px;top:217px;width:101px;height:30px;background:#f0f8ff;"></div>
<div style="left:102px;top:217px;width:300px;height:30px;background:#eaeaea;"></div>
<div style="left:402px;top:217px;width:159px;height:30px;background:#f0f8ff;"></div>
<div style="left:1px;top:247px;width:560px;height:1px;background:#d6d9dd;"></div>
<div class="cb" style="left:41px;top:224px"></div>
<div class="g" style="left:106.5px;top:218px;height:30px;line-height:30px;width:294px;letter-spacing:0.227px;">Unita misura confezione</div>
<div style="left:1px;top:248px;width:101px;height:30px;background:#fff;"></div>
<div style="left:102px;top:248px;width:300px;height:30px;background:#eaeaea;"></div>
<div style="left:402px;top:248px;width:159px;height:30px;background:#fff;"></div>
<div style="left:1px;top:278px;width:560px;height:1px;background:#d6d9dd;"></div>
<div class="cb" style="left:41px;top:255px"></div>
<div class="g" style="left:106.5px;top:249px;height:30px;line-height:30px;width:294px;letter-spacing:0.318px;">Valuta</div>
<div style="left:1px;top:279px;width:101px;height:30px;background:#f0f8ff;"></div>
<div style="left:102px;top:279px;width:300px;height:30px;background:#eaeaea;"></div>
<div style="left:402px;top:279px;width:159px;height:30px;background:#f0f8ff;"></div>
<div style="left:1px;top:309px;width:560px;height:1px;background:#d6d9dd;"></div>
<div class="cbc" style="left:41px;top:286px"><svg style="left:0;top:0" width="17" height="17" viewBox="0 0 17 17"><path d="M3.4 8.4L7.1 11.8L13.5 5.6" fill="none" stroke="#fff" stroke-width="1.6" stroke-linecap="round" stroke-linejoin="round"/></svg></div>
<div class="g" style="left:106.5px;top:280px;height:30px;line-height:30px;width:294px;letter-spacing:0.287px;">Agente documento</div>
</div>
<div style="left:1891px;top:700px;width:21px;height:292px;background:#f0f0f0;"></div>
<svg style="left:1891px;top:700px" width="21" height="292" viewBox="0 0 21 292"><path d="M5.8 13.1L15.2 13.1L10.5 7.9Z" fill="#8a8a8a"/><path d="M5.8 279.4L15.2 279.4L10.5 284.6Z" fill="#8a8a8a"/></svg>
<div style="left:1895px;top:722px;width:13px;height:36px;background:#878787;"></div>
<div style="left:1105px;top:992px;width:62px;height:22px;background:#fff;"></div>
<div style="left:1167px;top:992px;width:15px;height:22px;background:#f0f8ff;"></div>
<div style="left:1182px;top:992px;width:709px;height:22px;background:#f0f0f0;"></div>
<svg style="left:1109px;top:999px" width="10" height="8" viewBox="0 0 10 8"><path d="M0.8 0.3V7.5" stroke="#949fae" stroke-width="1.4"/><path d="M5.2 0.3V7.5L1.4 3.9Z" fill="#949fae"/><path d="M9.2 0.3V7.5L5.4 3.9Z" fill="#949fae"/></svg>
<div class="g" style="left:1119px;top:992px;height:22px;line-height:22px;width:50px;letter-spacing:0.555px;text-align:center;">1/57</div>
<svg style="left:1170px;top:999px" width="10" height="8" viewBox="0 0 10 8"><path d="M8.6 0.3V7.5" stroke="#46648f" stroke-width="1.4"/><path d="M4.2 0.3V7.5L8 3.9Z" fill="#46648f"/><path d="M0.2 0.3V7.5L4 3.9Z" fill="#46648f"/></svg>
<svg style="left:1182px;top:992px" width="709" height="22" viewBox="0 0 709 22"><path d="M14.1 6.3L14.1 15.7L8.9 11Z" fill="#c2c6cf"/><path d="M695.4 6.3L695.4 15.7L700.6 11Z" fill="#c2c6cf"/></svg>
<div style="left:1913px;top:187px;width:1px;height:826px;background:#214f6a;"></div>
<div style="left:1912px;top:286px;width:1px;height:727px;background:#e6fbff;"></div>
<div style="left:1915px;top:144px;width:1px;height:869px;background:#6e829c;"></div>
<div style="left:1677px;top:150px;width:233px;height:32px;border:1px solid #1d5f85;background:linear-gradient(#c3e8fb 0%,#e4f5fd 50%,#ffffff 100%);"></div>
<div class="lbl" style="left:1677px;top:151px;height:32px;line-height:32px;width:233px;letter-spacing:0.314px;text-align:center;">Altre impostazioni statistica...</div>
<div style="left:0px;top:144px;width:1px;height:869px;background:#4a86b6;"></div>
<div style="left:1px;top:144px;width:1px;height:869px;background:#1f5b8b;"></div>
<div style="left:286px;top:146px;width:1px;height:867px;background:#e4fbff;"></div>
<div style="left:287px;top:145px;width:1px;height:868px;background:#214f6a;"></div>
<div style="left:2px;top:145px;width:127px;height:1px;background:#1d5f85;"></div>
<div style="left:6px;top:150px;width:224px;height:25px;background:#f0f8ff;"></div>
<div style="left:234px;top:150px;width:51px;height:32px;border:1px solid #1d5f85;background:linear-gradient(#cdeafb 0%,#e8f5fd 45%,#ffffff 100%);"></div>
<div class="lbl" style="left:234px;top:151px;height:32px;line-height:32px;width:51px;letter-spacing:0.225px;text-align:center;">Filtra</div>
<div style="left:2px;top:183px;width:285px;height:2px;background:#0a507a;"></div>
<div class="lbl" style="left:10.5px;top:187px;height:23px;line-height:23px;letter-spacing:0.214px;">DATI: CICLO ATTIVO/PASSIVO</div>
<div style="left:2px;top:209px;width:285px;height:1px;background:#2a6b8e;"></div>
<div style="left:3px;top:238px;width:283px;height:1px;background:#4a4a4a;"></div>
<div style="left:285px;top:210px;width:1px;height:29px;background:#4a4a4a;"></div>
<svg style="left:15.6px;top:215px" width="19" height="19" viewBox="0 0 19 19"><rect x="1.3" y="0.8" width="15.4" height="16.6" rx="3" fill="#fbffff" stroke="#6d9ebb" stroke-width="1.6"/><rect x="4.1" y="4.2" width="9.8" height="9.6" fill="#dff6fb"/><path d="M4.1 4.9H13.9M4.1 13H13.9" stroke="#73a3bf" stroke-width="1.4" fill="none"/><path d="M4.1 7.5H13.9M4.1 10.4H13.9" stroke="#6a98b3" stroke-width="0.9" fill="none"/></svg>
<div class="fg" style="left:39.5px;top:213px;height:24px;line-height:24px;">Funzioni griglia</div>
<div style="left:152px;top:212px;width:40px;height:24px;background:#f3f3f3;border-left:1px solid #9a9a9a;border-top:1px solid #a8a8a8;"></div>
<svg style="left:152px;top:212px" width="40" height="24" viewBox="0 0 40 24"><path d="M26.6 10.5Q28.6 9.6 28.5 7.2V6.7Q28.5 4.7 26.5 4.7H15.6Q13.6 4.7 13.6 6.7V7.6Q13.6 8.6 14.4 9.4L19.3 14.6V18Q19.3 18.8 20 19.3L23 21.5V20" fill="none" stroke="#1f6089" stroke-width="1.55" stroke-linejoin="round" stroke-linecap="round"/><path d="M20.3 11.9H25.5M22.9 11.9V16.8" stroke="#1f6089" stroke-width="1.8" fill="none"/></svg>
<svg style="left:274px;top:213px" width="10" height="24" viewBox="0 0 10 24"><path d="M1.2 2.2L3.9 4.7L1.2 7.2M5 2.2L7.7 4.7L5 7.2" fill="none" stroke="#111" stroke-width="1.5"/><path d="M1.6 17.2H7L4.3 20.2Z" fill="#111"/></svg>
<div style="left:3px;top:258px;width:283px;height:1px;background:#8a9cb3;"></div>
<div style="left:3px;top:259px;width:100px;height:23px;background:#fff;"></div>
<div style="left:104px;top:259px;width:182px;height:23px;background:#f3f3f3;"></div>
<div style="left:3px;top:282px;width:283px;height:1px;background:#8a9cb3;"></div>
<div style="left:103px;top:258px;width:1px;height:25px;background:#8a9cb3;"></div>
<div class="g" style="left:8px;top:259px;height:23px;line-height:23px;letter-spacing:-0.047px;">Seleziona</div>
<div class="g" style="left:111px;top:259px;height:23px;line-height:23px;letter-spacing:0.068px;">Descrizione Fact</div>
<div style="left:2px;top:283px;width:263px;height:708px;overflow:hidden">
<div style="left:1px;top:0px;width:101px;height:30px;background:#fff;"></div>
<div style="left:102px;top:0px;width:161px;height:30px;background:#eaeaea;"></div>
<div style="left:1px;top:30px;width:262px;height:1px;background:#d6d9dd;"></div>
<div class="cb" style="left:41px;top:7px"></div>
<div class="g" style="left:106.5px;top:1px;height:30px;line-height:30px;width:156.5px;letter-spacing:0.135px;">Colli consegnati (VEN)</div>
<div style="left:1px;top:31px;width:101px;height:30px;background:#f0f8ff;"></div>
<div style="left:102px;top:31px;width:161px;height:30px;background:#eaeaea;"></div>
<div style="left:1px;top:61px;width:262px;height:1px;background:#d6d9dd;"></div>
<div class="cb" style="left:41px;top:38px"></div>
<div class="g" style="left:106.5px;top:32px;height:30px;line-height:30px;width:156.5px;letter-spacing:0.210px;">Quantità consegnata (VEN)</div>
<div style="left:1px;top:62px;width:101px;height:30px;background:#fff;"></div>
<div style="left:102px;top:62px;width:161px;height:30px;background:#eaeaea;"></div>
<div style="left:1px;top:92px;width:262px;height:1px;background:#d6d9dd;"></div>
<div class="cb" style="left:41px;top:69px"></div>
<div class="g" style="left:106.5px;top:63px;height:30px;line-height:30px;width:156.5px;letter-spacing:0.197px;">Colli ordinati (VEN)</div>
<div style="left:1px;top:93px;width:101px;height:30px;background:#f0f8ff;"></div>
<div style="left:102px;top:93px;width:161px;height:30px;background:#eaeaea;"></div>
<div style="left:1px;top:123px;width:262px;height:1px;background:#d6d9dd;"></div>
<div class="cbc" style="left:41px;top:100px"><svg style="left:0;top:0" width="17" height="17" viewBox="0 0 17 17"><path d="M3.4 8.4L7.1 11.8L13.5 5.6" fill="none" stroke="#fff" stroke-width="1.6" stroke-linecap="round" stroke-linejoin="round"/></svg></div>
<div class="g" style="left:106.5px;top:94px;height:30px;line-height:30px;width:156.5px;letter-spacing:0.271px;">Quantità ordinata (VEN)</div>
<div style="left:1px;top:124px;width:101px;height:30px;background:#fff;"></div>
<div style="left:102px;top:124px;width:161px;height:30px;background:#eaeaea;"></div>
<div style="left:1px;top:154px;width:262px;height:1px;background:#d6d9dd;"></div>
<div class="cb" style="left:41px;top:131px"></div>
<div class="g" style="left:106.5px;top:125px;height:30px;line-height:30px;width:156.5px;letter-spacing:0.269px;">Colli fatturati (VEN)</div>
<div style="left:1px;top:155px;width:101px;height:30px;background:#f0f8ff;"></div>
<div style="left:102px;top:155px;width:161px;height:30px;background:#eaeaea;"></div>
<div style="left:1px;top:185px;width:262px;height:1px;background:#d6d9dd;"></div>
<div class="cb" style="left:41px;top:162px"></div>
<div class="g" style="left:106.5px;top:156px;height:30px;line-height:30px;width:156.5px;letter-spacing:0.330px;">Quantità fatturata (VEN)</div>
<div style="left:1px;top:186px;width:101px;height:30px;background:#fff;"></div>
<div style="left:102px;top:186px;width:161px;height:30px;background:#eaeaea;"></div>
<div style="left:1px;top:216px;width:262px;height:1px;background:#d6d9dd;"></div>
<div class="cbc" style="left:41px;top:193px"><svg style="left:0;top:0" width="17" height="17" viewBox="0 0 17 17"><path d="M3.4 8.4L7.1 11.8L13.5 5.6" fill="none" stroke="#fff" stroke-width="1.6" stroke-linecap="round" stroke-linejoin="round"/></svg></div>
<div class="g" style="left:106.5px;top:187px;height:30px;line-height:30px;width:156.5px;letter-spacing:0.198px;">Valore consegnato (VEN)</div>
<div style="left:1px;top:217px;width:101px;height:30px;background:#f0f8ff;"></div>
<div style="left:102px;top:217px;width:161px;height:30px;background:#eaeaea;"></div>
<div style="left:1px;top:247px;width:262px;height:1px;background:#d6d9dd;"></div>
<div class="cb" style="left:41px;top:224px"></div>
<div class="g" style="left:106.5px;top:218px;height:30px;line-height:30px;width:156.5px;letter-spacing:0.247px;">Valore consegnato in valuta (VEN)</div>
<div style="left:1px;top:248px;width:101px;height:30px;background:#fff;"></div>
<div style="left:102px;top:248px;width:161px;height:30px;background:#eaeaea;"></div>
<div style="left:1px;top:278px;width:262px;height:1px;background:#d6d9dd;"></div>
<div class="cb" style="left:41px;top:255px"></div>
<div class="g" style="left:106.5px;top:249px;height:30px;line-height:30px;width:156.5px;letter-spacing:0.224px;">Valore consegnato prezzo listino</div>
<div style="left:1px;top:279px;width:101px;height:30px;background:#f0f8ff;"></div>
<div style="left:102px;top:279px;width:161px;height:30px;background:#eaeaea;"></div>
<div style="left:1px;top:309px;width:262px;height:1px;background:#d6d9dd;"></div>
<div class="cb" style="left:41px;top:286px"></div>
<div class="g" style="left:106.5px;top:280px;height:30px;line-height:30px;width:156.5px;letter-spacing:0.263px;">Valore ordinato (VEN)</div>
<div style="left:1px;top:310px;width:101px;height:30px;background:#fff;"></div>
<div style="left:102px;top:310px;width:161px;height:30px;background:#eaeaea;"></div>
<div style="left:1px;top:340px;width:262px;height:1px;background:#d6d9dd;"></div>
<div class="cb" style="left:41px;top:317px"></div>
<div class="g" style="left:106.5px;top:311px;height:30px;line-height:30px;width:156.5px;letter-spacing:0.295px;">Valore ordinato in valuta (VEN)</div>
<div style="left:1px;top:341px;width:101px;height:30px;background:#f0f8ff;"></div>
<div style="left:102px;top:341px;width:161px;height:30px;background:#eaeaea;"></div>
<div style="left:1px;top:371px;width:262px;height:1px;background:#d6d9dd;"></div>
<div class="cb" style="left:41px;top:348px"></div>
<div class="g" style="left:106.5px;top:342px;height:30px;line-height:30px;width:156.5px;letter-spacing:0.271px;">Valore ordinato prezzo listino</div>
<div style="left:1px;top:372px;width:101px;height:30px;background:#fff;"></div>
<div style="left:102px;top:372px;width:161px;height:30px;background:#eaeaea;"></div>
<div style="left:1px;top:402px;width:262px;height:1px;background:#d6d9dd;"></div>
<div class="cb" style="left:41px;top:379px"></div>
<div class="g" style="left:106.5px;top:373px;height:30px;line-height:30px;width:156.5px;letter-spacing:0.328px;">Valore fatturato (VEN)</div>
<div style="left:1px;top:403px;width:101px;height:30px;background:#f0f8ff;"></div>
<div style="left:102px;top:403px;width:161px;height:30px;background:#eaeaea;"></div>
<div style="left:1px;top:433px;width:262px;height:1px;background:#d6d9dd;"></div>
<div class="cb" style="left:41px;top:410px"></div>
<div class="g" style="left:106.5px;top:404px;height:30px;line-height:30px;width:156.5px;letter-spacing:0.339px;">Valore fatturato in valuta (VEN)</div>
<div style="left:1px;top:434px;width:101px;height:30px;background:#fff;"></div>
<div style="left:102px;top:434px;width:161px;height:30px;background:#eaeaea;"></div>
<div style="left:1px;top:464px;width:262px;height:1px;background:#d6d9dd;"></div>
<div class="cb" style="left:41px;top:441px"></div>
<div class="g" style="left:106.5px;top:435px;height:30px;line-height:30px;width:156.5px;letter-spacing:0.318px;">Valore fatturato prezzo listino</div>
<div style="left:1px;top:465px;width:101px;height:30px;background:#f0f8ff;"></div>
<div style="left:102px;top:465px;width:161px;height:30px;background:#eaeaea;"></div>
<div style="left:1px;top:495px;width:262px;height:1px;background:#d6d9dd;"></div>
<div class="cb" style="left:41px;top:472px"></div>
<div class="g" style="left:106.5px;top:466px;height:30px;line-height:30px;width:156.5px;letter-spacing:0.228px;">Provvigione agente 1 su consegnato</div>
<div style="left:1px;top:496px;width:101px;height:30px;background:#fff;"></div>
<div style="left:102px;top:496px;width:161px;height:30px;background:#eaeaea;"></div>
<div style="left:1px;top:526px;width:262px;height:1px;background:#d6d9dd;"></div>
<div class="cb" style="left:41px;top:503px"></div>
<div class="g" style="left:106.5px;top:497px;height:30px;line-height:30px;width:156.5px;letter-spacing:0.228px;">Provvigione agente 2 su consegnato</div>
<div style="left:1px;top:527px;width:101px;height:30px;background:#f0f8ff;"></div>
<div style="left:102px;top:527px;width:161px;height:30px;background:#eaeaea;"></div>
<div style="left:1px;top:557px;width:262px;height:1px;background:#d6d9dd;"></div>
<div class="cb" style="left:41px;top:534px"></div>
<div class="g" style="left:106.5px;top:528px;height:30px;line-height:30px;width:156.5px;letter-spacing:0.145px;">Costo su consegnato (VEN)</div>
<div style="left:1px;top:558px;width:101px;height:30px;background:#fffaf0;"></div>
<div style="left:102px;top:558px;width:161px;height:30px;background:#bfdbf7;"></div>
<div style="left:1px;top:588px;width:101px;height:1px;background:#f5fafd;"></div>
<div style="left:102px;top:588px;width:161px;height:1px;background:#dde1e6;"></div>
<div class="cbc" style="left:41px;top:565px"><svg style="left:0;top:0" width="17" height="17" viewBox="0 0 17 17"><path d="M3.4 8.4L7.1 11.8L13.5 5.6" fill="none" stroke="#fff" stroke-width="1.6" stroke-linecap="round" stroke-linejoin="round"/></svg></div>
<div class="g" style="left:106.5px;top:559px;height:30px;line-height:30px;width:156.5px;letter-spacing:0.263px;">Costo su fatturato (VEN)</div>
<div style="left:1px;top:589px;width:101px;height:30px;background:#f0f8ff;"></div>
<div style="left:102px;top:589px;width:161px;height:30px;background:#eaeaea;"></div>
<div style="left:1px;top:619px;width:262px;height:1px;background:#d6d9dd;"></div>
<div class="cb" style="left:41px;top:596px"></div>
<div class="g" style="left:106.5px;top:590px;height:30px;line-height:30px;width:156.5px;letter-spacing:0.267px;">Quantità Budget Vendite (VEN)</div>
<div style="left:1px;top:620px;width:101px;height:30px;background:#fff;"></div>
<div style="left:102px;top:620px;width:161px;height:30px;background:#eaeaea;"></div>
<div style="left:1px;top:650px;width:262px;height:1px;background:#d6d9dd;"></div>
<div class="cb" style="left:41px;top:627px"></div>
<div class="g" style="left:106.5px;top:621px;height:30px;line-height:30px;width:156.5px;letter-spacing:0.252px;">Valore Budget Vendite (VEN)</div>
<div style="left:1px;top:651px;width:101px;height:30px;background:#f0f8ff;"></div>
<div style="left:102px;top:651px;width:161px;height:30px;background:#eaeaea;"></div>
<div style="left:1px;top:681px;width:262px;height:1px;background:#d6d9dd;"></div>
<div class="cb" style="left:41px;top:658px"></div>
<div class="g" style="left:106.5px;top:652px;height:30px;line-height:30px;width:156.5px;letter-spacing:0.323px;">Provvigione agente 1 da fatturato</div>
<div style="left:1px;top:682px;width:101px;height:30px;background:#fff;"></div>
<div style="left:102px;top:682px;width:161px;height:30px;background:#eaeaea;"></div>
<div style="left:1px;top:712px;width:262px;height:1px;background:#d6d9dd;"></div>
<div class="cb" style="left:41px;top:689px"></div>
<div class="g" style="left:106.5px;top:683px;height:30px;line-height:30px;width:156.5px;letter-spacing:0.323px;">Provvigione agente 2 da fatturato</div>
</div>
<div style="left:265px;top:283px;width:21px;height:708px;background:#f0f0f0;"></div>
<svg style="left:265px;top:283px" width="21" height="708" viewBox="0 0 21 708"><path d="M5.8 13.1L15.2 13.1L10.5 7.9Z" fill="#8a8a8a"/><path d="M5.8 695.4L15.2 695.4L10.5 700.6Z" fill="#8a8a8a"/></svg>
<div style="left:269px;top:305px;width:13px;height:104px;background:#878787;"></div>
<div style="left:2px;top:991px;width:76px;height:21px;background:#fff;"></div>
<div style="left:3px;top:991px;width:16px;height:21px;background:#f0f8ff;"></div>
<div style="left:78px;top:991px;width:16px;height:21px;background:#f0f8ff;"></div>
<div style="left:94px;top:991px;width:171px;height:21px;background:#f0f0f0;"></div>
<svg style="left:6px;top:998px" width="10" height="8" viewBox="0 0 10 8"><path d="M0.8 0.3V7.5" stroke="#4d6a8e" stroke-width="1.4"/><path d="M5.2 0.3V7.5L1.4 3.9Z" fill="#4d6a8e"/><path d="M9.2 0.3V7.5L5.4 3.9Z" fill="#4d6a8e"/></svg>
<div class="g" style="left:22px;top:991px;height:22px;line-height:22px;width:52px;letter-spacing:0.446px;text-align:center;">19/137</div>
<svg style="left:81px;top:998px" width="10" height="8" viewBox="0 0 10 8"><path d="M8.6 0.3V7.5" stroke="#46648f" stroke-width="1.4"/><path d="M4.2 0.3V7.5L8 3.9Z" fill="#46648f"/><path d="M0.2 0.3V7.5L4 3.9Z" fill="#46648f"/></svg>
<svg style="left:94px;top:991px" width="171" height="21" viewBox="0 0 171 21"><path d="M12.1 5.9L12.1 15.3L6.9 10.6Z" fill="#7f7f7f"/><path d="M157.9 5.9L157.9 15.3L163.1 10.6Z" fill="#7f7f7f"/></svg>
<div style="left:116px;top:995px;width:81px;height:14px;background:#878787;"></div>
</body></html>
